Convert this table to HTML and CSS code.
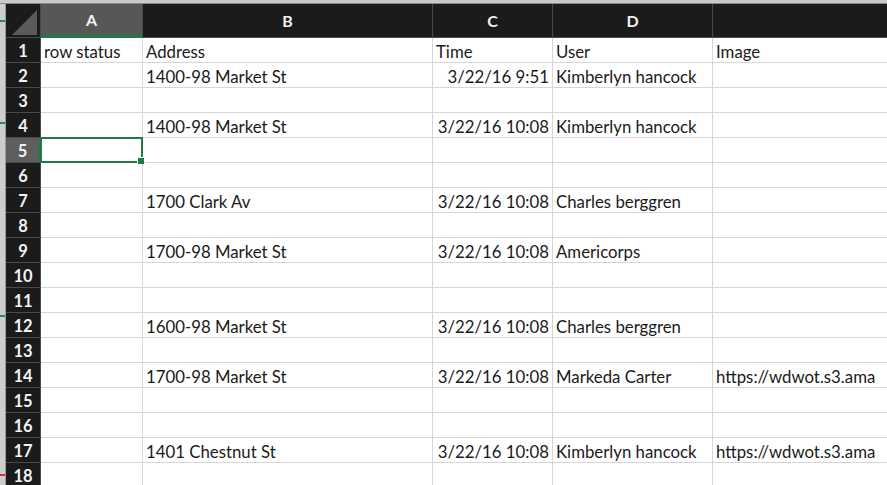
FILE: index.html
```html
<!DOCTYPE html>
<html>
<head>
<meta charset="utf-8">
<link rel="stylesheet" href="styles.css">
</head>
<body>
<div class="screen">
  <div class="topstrip"></div>
  <div class="main">
    <div class="behind">
      <span class="tick t1"></span>
      <span class="tick t2"></span>
      <span class="tick t3"></span>
      <span class="tick t4"></span>
    </div>
    <div class="sheet">
      <div class="grid">
        <div class="corner"><svg width="35" height="35" viewBox="0 0 35 35"><polygon points="31,6 31,31 6,31" fill="#5a5a5a"/></svg></div>
        <div class="ch sel">A</div>
        <div class="ch">B</div>
        <div class="ch">C</div>
        <div class="ch">D</div>
        <div class="ch"></div>

        <div class="rh">1</div><div class="c">row status</div><div class="c">Address</div><div class="c">Time</div><div class="c">User</div><div class="c">Image</div>
        <div class="rh">2</div><div class="c"></div><div class="c">1400-98 Market St</div><div class="c r">3/22/16 9:51</div><div class="c">Kimberlyn hancock</div><div class="c"></div>
        <div class="rh">3</div><div class="c"></div><div class="c"></div><div class="c"></div><div class="c"></div><div class="c"></div>
        <div class="rh">4</div><div class="c"></div><div class="c">1400-98 Market St</div><div class="c r">3/22/16 10:08</div><div class="c">Kimberlyn hancock</div><div class="c"></div>
        <div class="rh selrow">5</div><div class="c active"><span class="handle"></span></div><div class="c"></div><div class="c"></div><div class="c"></div><div class="c"></div>
        <div class="rh">6</div><div class="c"></div><div class="c"></div><div class="c"></div><div class="c"></div><div class="c"></div>
        <div class="rh">7</div><div class="c"></div><div class="c">1700 Clark Av</div><div class="c r">3/22/16 10:08</div><div class="c">Charles berggren</div><div class="c"></div>
        <div class="rh">8</div><div class="c"></div><div class="c"></div><div class="c"></div><div class="c"></div><div class="c"></div>
        <div class="rh">9</div><div class="c"></div><div class="c">1700-98 Market St</div><div class="c r">3/22/16 10:08</div><div class="c">Americorps</div><div class="c"></div>
        <div class="rh">10</div><div class="c"></div><div class="c"></div><div class="c"></div><div class="c"></div><div class="c"></div>
        <div class="rh">11</div><div class="c"></div><div class="c"></div><div class="c"></div><div class="c"></div><div class="c"></div>
        <div class="rh">12</div><div class="c"></div><div class="c">1600-98 Market St</div><div class="c r">3/22/16 10:08</div><div class="c">Charles berggren</div><div class="c"></div>
        <div class="rh">13</div><div class="c"></div><div class="c"></div><div class="c"></div><div class="c"></div><div class="c"></div>
        <div class="rh">14</div><div class="c"></div><div class="c">1700-98 Market St</div><div class="c r">3/22/16 10:08</div><div class="c">Markeda Carter</div><div class="c">https://wdwot.s3.ama</div>
        <div class="rh">15</div><div class="c"></div><div class="c"></div><div class="c"></div><div class="c"></div><div class="c"></div>
        <div class="rh">16</div><div class="c"></div><div class="c"></div><div class="c"></div><div class="c"></div><div class="c"></div>
        <div class="rh">17</div><div class="c"></div><div class="c">1401 Chestnut St</div><div class="c r">3/22/16 10:08</div><div class="c">Kimberlyn hancock</div><div class="c">https://wdwot.s3.ama</div>
        <div class="rh">18</div><div class="c"></div><div class="c"></div><div class="c"></div><div class="c"></div><div class="c"></div>
      </div>
    </div>
  </div>
</div>
</body>
</html>
```
FILE: styles.css
```css
* { box-sizing: border-box; }
html, body { margin: 0; padding: 0; }
body {
  width: 887px;
  height: 485px;
  overflow: hidden;
  background: #ffffff;
  font-family: Lato, "Open Sans", sans-serif;
}
.screen {
  width: 887px;
  height: 485px;
  overflow: hidden;
  display: flex;
  flex-direction: column;
}
.topstrip {
  height: 4px;
  flex: none;
  background: #c9c9c9;
  border-bottom: 1px solid #8a8a8a;
}
.main {
  flex: 1;
  display: flex;
  min-height: 0;
}
.behind {
  width: 6px;
  flex: none;
  background: #cdcdcd;
  position: relative;
  border-right: 1px solid #9a9a9a;
}
.tick {
  position: absolute;
  left: 0;
  width: 5px;
  height: 2px;
  background: #2e8b4e;
}
.t1 { top: 16px; }
.t2 { top: 118px; }
.t3 { top: 311px; }
.t4 { top: 470px; background: #c0392b; }
.sheet {
  flex: 1;
  overflow: hidden;
  background: #fff;
}
.grid {
  display: grid;
  grid-template-columns: 35px 102px 290px 120px 160px 220px;
  grid-template-rows: 34px repeat(18, 25px);
  width: 927px;
}
.corner {
  background: #1b1b1b;
  border-right: 1px solid #4a4a4a;
  border-bottom: 1px solid #4a4a4a;
}
.corner svg { display: block; }
.ch {
  background: #1b1b1b;
  color: #f2f2f2;
  font-weight: 700;
  font-size: 16px;
  display: flex;
  align-items: center;
  justify-content: center;
  border-right: 1px solid #4a4a4a;
  border-bottom: 1px solid #4a4a4a;
}
.ch.sel {
  background: #575757;
  border-bottom: 3px solid #1f7a48;
}
.rh {
  background: #1b1b1b;
  color: #f2f2f2;
  font-weight: 700;
  font-size: 16.5px;
  display: flex;
  align-items: center;
  justify-content: center;
  border-right: 1px solid #4a4a4a;
  border-bottom: 1px solid #4a4a4a;
  padding-top: 2px;
}
.rh.selrow {
  background: #5e5e5e;
  border-right: 2px solid #1f7a48;
}
.c {
  border-right: 1px solid #d6d6d6;
  border-bottom: 1px solid #d6d6d6;
  color: #1a1a1a;
  font-size: 16.8px;
  padding: 2px 3px 0 3px;
  display: flex;
  align-items: center;
  white-space: nowrap;
  overflow: hidden;
}
.c.r { justify-content: flex-end; }
.c.active {
  position: relative;
  overflow: visible;
  border: 2px solid #1f7a48;
  margin: -1px 0 0 -1px;
  z-index: 2;
}
.handle {
  position: absolute;
  right: -4px;
  bottom: -4px;
  width: 6px;
  height: 6px;
  background: #1f7a48;
  border: 1px solid #fff;
  box-sizing: content-box;
}
```
